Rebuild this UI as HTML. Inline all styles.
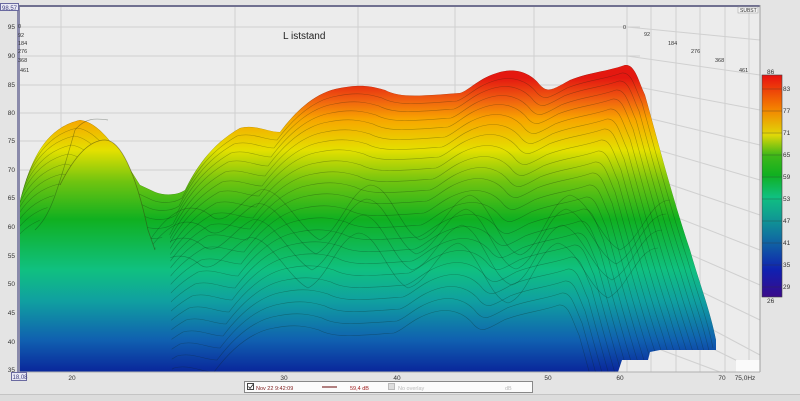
<!DOCTYPE html>
<html><head><meta charset="utf-8"><style>
html,body{margin:0;padding:0;background:#e6e6e6;width:800px;height:401px;overflow:hidden;position:relative;}
svg{display:block;position:absolute;left:0;top:0;font-family:"Liberation Sans",sans-serif;}
</style></head><body>
<svg width="800" height="401" viewBox="0 0 800 401" xmlns="http://www.w3.org/2000/svg">
<defs>
<linearGradient id="g" gradientUnits="userSpaceOnUse" x1="0" y1="370" x2="0" y2="56">
<stop offset="0" stop-color="#0a2a9c"/>
<stop offset="0.095" stop-color="#1060b0"/>
<stop offset="0.22" stop-color="#10a0a0"/>
<stop offset="0.32" stop-color="#10c080"/>
<stop offset="0.48" stop-color="#10b020"/>
<stop offset="0.6" stop-color="#70c410"/>
<stop offset="0.7" stop-color="#e4e000"/>
<stop offset="0.8" stop-color="#f8a400"/>
<stop offset="0.86" stop-color="#f06010"/>
<stop offset="0.93" stop-color="#e41810"/>
</linearGradient>
<linearGradient id="cb" x1="0" y1="1" x2="0" y2="0">
<stop offset="0" stop-color="#3a0a8a"/>
<stop offset="0.12" stop-color="#1020b0"/>
<stop offset="0.27" stop-color="#1070a0"/>
<stop offset="0.37" stop-color="#10a090"/>
<stop offset="0.45" stop-color="#10c080"/>
<stop offset="0.55" stop-color="#10b020"/>
<stop offset="0.64" stop-color="#40b818"/>
<stop offset="0.73" stop-color="#e0d808"/>
<stop offset="0.85" stop-color="#f48000"/>
<stop offset="1" stop-color="#e81010"/>
</linearGradient>
<path id="top" d="M19,205 C30,160 45,128 80,120 C100,122 118,150 140,185 L155,192 C165,196 178,195 185,190 C195,170 210,145 240,128 C255,124 268,132 280,132 C295,112 315,92 340,88 C360,84 372,86 385,90 C400,98 420,96 460,93 C470,90 478,78 500,72 C515,68 530,72 540,85 C548,93 552,90 570,80 C590,72 605,72 625,65 C635,64 638,80 645,95 C655,130 670,190 690,250 C700,285 710,310 716,340"/>
<path id="mid" d="M150,240 C170,210 190,200 210,215 C225,230 240,200 260,190 C280,185 300,230 320,240 C340,230 350,190 370,185 C390,185 400,230 420,240 C440,235 450,200 470,195 C490,200 500,250 520,255 C540,250 550,200 570,195 C590,200 600,240 620,250 C640,240 650,200 670,200"/>
<clipPath id="cl"><path d="M19,205 C30,160 45,128 80,120 C100,122 118,150 140,185 L155,192 C165,196 178,195 185,190 C195,170 210,145 240,128 C255,124 268,132 280,132 C295,112 315,92 340,88 C360,84 372,86 385,90 C400,98 420,96 460,93 C470,90 478,78 500,72 C515,68 530,72 540,85 C548,93 552,90 570,80 C590,72 605,72 625,65 C635,64 638,80 645,95 C655,130 670,190 690,250 C700,285 710,310 716,340 L716,350 L660,350 L650,352 L648,360 L622,360 L618,372 L19,372 Z"/></clipPath>
</defs>
<rect x="0" y="0" width="800" height="401" fill="#e4e4e4"/>
<rect x="0" y="394" width="800" height="7" fill="#dcdcdc"/>
<line x1="0" y1="394.5" x2="800" y2="394.5" stroke="#c4c4c4"/>
<rect x="19" y="6" width="741" height="366" fill="#ececec"/>
<g stroke="#d0d0d0" stroke-width="1">
<line x1="19" y1="27" x2="640" y2="27"/><line x1="19" y1="56" x2="640" y2="56"/><line x1="19" y1="85" x2="640" y2="85"/>
<line x1="19" y1="113" x2="640" y2="113"/><line x1="19" y1="141" x2="640" y2="141"/><line x1="19" y1="170" x2="640" y2="170"/>
<line x1="19" y1="198" x2="640" y2="198"/><line x1="19" y1="227" x2="640" y2="227"/><line x1="19" y1="256" x2="640" y2="256"/>
<line x1="19" y1="284" x2="640" y2="284"/><line x1="19" y1="313" x2="640" y2="313"/><line x1="19" y1="342" x2="640" y2="342"/>
<line x1="61" y1="6" x2="61" y2="372"/><line x1="235" y1="6" x2="235" y2="372"/><line x1="358" y1="6" x2="358" y2="372"/><line x1="455" y1="6" x2="455" y2="372"/><line x1="534" y1="6" x2="534" y2="372"/>
<line x1="627" y1="6" x2="627" y2="372"/><line x1="651" y1="6" x2="651" y2="372"/><line x1="676" y1="6" x2="676" y2="372"/><line x1="700" y1="6" x2="700" y2="372"/><line x1="725" y1="6" x2="725" y2="372"/><line x1="749" y1="6" x2="749" y2="372"/>
<line x1="627" y1="27" x2="760" y2="40"/><line x1="627" y1="56" x2="760" y2="75"/><line x1="627" y1="85" x2="760" y2="110"/>
<line x1="627" y1="113" x2="760" y2="145"/><line x1="627" y1="141" x2="760" y2="180"/><line x1="627" y1="170" x2="760" y2="215"/>
<line x1="627" y1="198" x2="760" y2="250"/><line x1="627" y1="227" x2="760" y2="285"/><line x1="627" y1="256" x2="760" y2="320"/>
<line x1="627" y1="284" x2="760" y2="355"/><line x1="640" y1="313" x2="760" y2="372"/><line x1="640" y1="342" x2="720" y2="372"/>
</g>
<rect x="736" y="360" width="24" height="12" fill="#fafafa"/>
<rect x="19" y="50" width="700" height="322" fill="url(#g)" clip-path="url(#cl)"/>
<g clip-path="url(#cl)" fill="none" stroke="#102010" stroke-opacity="0.32" stroke-width="0.6">
<use href="#top" transform="translate(0,0)"/>
<use href="#top" transform="translate(-3,8)"/><use href="#top" transform="translate(-6,16)"/>
<use href="#top" transform="translate(-9,25)"/><use href="#top" transform="translate(-12,34)"/><use href="#top" transform="translate(-15,44)"/>
<use href="#top" transform="translate(-18,54)"/><use href="#top" transform="translate(-21,64)"/><use href="#top" transform="translate(-24,75)"/>
<use href="#top" transform="translate(-27,86)"/><use href="#top" transform="translate(-30,97)"/><use href="#top" transform="translate(-33,108)"/>
<use href="#top" transform="translate(-36,120)"/><use href="#top" transform="translate(-39,132)"/><use href="#top" transform="translate(-42,144)"/>
<use href="#top" transform="translate(-45,156)"/><use href="#top" transform="translate(-48,168)"/><use href="#top" transform="translate(-51,180)"/>
<use href="#top" transform="translate(-54,192)"/><use href="#top" transform="translate(-57,204)"/><use href="#top" transform="translate(-60,216)"/>
<use href="#top" transform="translate(-63,228)"/><use href="#top" transform="translate(-66,240)"/>
<use href="#mid" transform="translate(0,0)"/><use href="#mid" transform="translate(-4,14)"/><use href="#mid" transform="translate(-8,30)"/><use href="#mid" transform="translate(-12,48)"/>
</g>
<path d="M19,372 L19,240 C40,230 50,200 60,185 C75,155 90,140 105,140 C120,140 135,170 148,230 L155,250 C160,240 165,230 170,235 L172,372 Z" fill="url(#g)"/>
<path d="M60,185 C75,155 90,140 105,140 C120,140 135,170 148,230 L155,250" fill="none" stroke="#3a3a10" stroke-opacity="0.5" stroke-width="0.8"/>
<path d="M35,230 C50,215 55,200 75,130 C85,118 95,118 108,120" fill="none" stroke="#102010" stroke-opacity="0.35" stroke-width="0.7"/>
<rect x="17" y="6" width="3" height="366" fill="#8a8aaa"/>
<rect x="19" y="5" width="741" height="2" fill="#707090"/>
<line x1="760" y1="5" x2="760" y2="372" stroke="#a0a0a0"/>
<line x1="19" y1="372" x2="760" y2="372" stroke="#b0b0b0"/>
<rect x="0.5" y="3.5" width="18" height="7" fill="#e8e8f4" stroke="#6a6aa0"/>
<text x="2" y="10" font-size="6" fill="#404080">98,57</text>
<rect x="11.5" y="372.5" width="15" height="8" fill="#e8e8f4" stroke="#6a6aa0"/>
<text x="12.5" y="379" font-size="6" fill="#404080">18,08</text>
<rect x="738" y="7" width="20" height="6" fill="#f4f4f4" stroke="#999" stroke-width="0.5"/>
<text x="740" y="12" font-size="5" fill="#333">SUBST</text>
<g font-size="6.5" fill="#333" text-anchor="end">
<text x="15" y="29">95</text><text x="15" y="58">90</text><text x="15" y="87">85</text><text x="15" y="115">80</text>
<text x="15" y="143">75</text><text x="15" y="172">70</text><text x="15" y="200">65</text><text x="15" y="229">60</text>
<text x="15" y="258">55</text><text x="15" y="286">50</text><text x="15" y="315">45</text><text x="15" y="344">40</text><text x="15" y="372">35</text>
</g>
<g font-size="5.5" fill="#333">
<text x="18" y="28">0</text><text x="18" y="37">92</text><text x="18" y="45">184</text><text x="18" y="53">276</text><text x="18" y="62">368</text><text x="20" y="72">461</text>
<text x="623" y="29">0</text><text x="644" y="36">92</text><text x="668" y="45">184</text><text x="691" y="53">276</text><text x="715" y="62">368</text><text x="739" y="72">461</text>
</g>
<g font-size="6.5" fill="#333" text-anchor="middle">
<text x="72" y="380">20</text><text x="284" y="380">30</text><text x="397" y="380">40</text><text x="548" y="380">50</text>
<text x="620" y="380">60</text><text x="722" y="380">70</text><text x="745" y="380">75,0Hz</text>
</g>
<text x="283" y="39" font-size="10" fill="#222">L iststand</text>
<rect x="762" y="75" width="20" height="222" fill="url(#cb)" stroke="#444" stroke-width="0.6"/>
<g stroke="#333" stroke-opacity="0.6" stroke-width="0.6">
<line x1="762" y1="89" x2="782" y2="89"/><line x1="762" y1="111" x2="782" y2="111"/><line x1="762" y1="133" x2="782" y2="133"/>
<line x1="762" y1="155" x2="782" y2="155"/><line x1="762" y1="177" x2="782" y2="177"/><line x1="762" y1="199" x2="782" y2="199"/>
<line x1="762" y1="221" x2="782" y2="221"/><line x1="762" y1="243" x2="782" y2="243"/><line x1="762" y1="265" x2="782" y2="265"/>
<line x1="762" y1="287" x2="782" y2="287"/>
</g>
<g font-size="6.5" fill="#333">
<text x="767" y="74">86</text><text x="783" y="91">83</text><text x="783" y="113">77</text><text x="783" y="135">71</text>
<text x="783" y="157">65</text><text x="783" y="179">59</text><text x="783" y="201">53</text><text x="783" y="223">47</text>
<text x="783" y="245">41</text><text x="783" y="267">35</text><text x="783" y="289">29</text><text x="767" y="303">26</text>
</g>
<rect x="244.5" y="381.5" width="288" height="11" fill="#fbfbfb" stroke="#888"/>
<rect x="247.5" y="383.5" width="6" height="6" fill="#fff" stroke="#444"/>
<path d="M248.5,386.5 l1.5,2 l3,-4" fill="none" stroke="#222" stroke-width="0.8"/>
<text x="256" y="390" font-size="5.5" fill="#802020">Nov 22 9:42:09</text>
<line x1="322" y1="387" x2="337" y2="387" stroke="#803030" stroke-width="1.2"/>
<text x="350" y="390" font-size="5.5" fill="#a02020">59,4 dB</text>
<rect x="388.5" y="383.5" width="6" height="6" fill="#ddd" stroke="#bbb"/>
<text x="398" y="390" font-size="5.5" fill="#bbb">No overlay</text>
<text x="505" y="390" font-size="5.5" fill="#bbb">dB</text>
</svg>
</body></html>
